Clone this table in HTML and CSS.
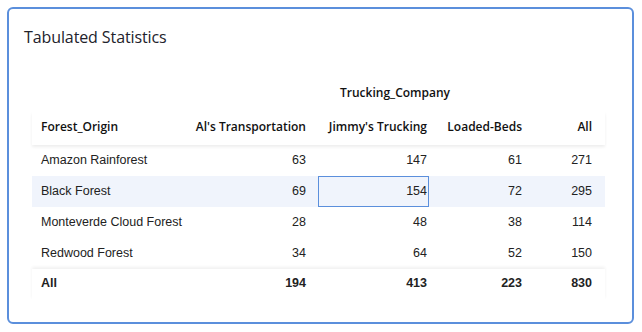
FILE: index.html
```html
<!DOCTYPE html>
<html lang="en">
<head>
    <meta charset="UTF-8">
    <meta name="viewport" content="width=device-width, initial-scale=1.0">
    <title>Tabulated Statistics</title>
    <link rel="stylesheet" href="styles.css">
</head>
<body>

<div class="stats-card">
    <h2 class="card-title">Tabulated Statistics</h2>
    <table class="pivot">
        <colgroup>
            <col class="c1"><col class="c2"><col class="c3"><col class="c4"><col class="c5">
        </colgroup>
        <thead>
            <tr class="group-row">
                <th></th>
                <th></th>
                <th colspan="3" class="group-label">Trucking_Company</th>
            </tr>
            <tr class="head-row">
                <th class="row-label">Forest_Origin</th>
                <th class="num p2">Al's Transportation</th>
                <th class="num p3">Jimmy's Trucking</th>
                <th class="num p4">Loaded-Beds</th>
                <th class="num p5">All</th>
            </tr>
        </thead>
        <tbody>
            <tr>
                <td class="row-label">Amazon Rainforest</td>
                <td class="num p2">63</td><td class="num p3">147</td><td class="num p4">61</td><td class="num p5">271</td>
            </tr>
            <tr class="hover">
                <td class="row-label">Black Forest</td>
                <td class="num p2">69</td><td class="num p3 selected">154</td><td class="num p4">72</td><td class="num p5">295</td>
            </tr>
            <tr>
                <td class="row-label">Monteverde Cloud Forest</td>
                <td class="num p2">28</td><td class="num p3">48</td><td class="num p4">38</td><td class="num p5">114</td>
            </tr>
            <tr>
                <td class="row-label">Redwood Forest</td>
                <td class="num p2">34</td><td class="num p3">64</td><td class="num p4">52</td><td class="num p5">150</td>
            </tr>
        </tbody>
        <tfoot>
            <tr>
                <td class="row-label">All</td>
                <td class="num p2">194</td><td class="num p3">413</td><td class="num p4">223</td><td class="num p5">830</td>
            </tr>
        </tfoot>
    </table>
</div>

</body>
</html>
```

FILE: styles.css
```css
/* card with pivot table */
body {
    margin: 0;
    padding: 7px 8px 8px 7px;
    font-family: "Liberation Sans", Arial, sans-serif;
    color: #222;
    background: #fff;
}
.stats-card {
    height: 317px;
    border: 2px solid #5b8fdc;
    border-radius: 6px;
    padding: 0 15px;
    box-sizing: border-box;
}
.card-title {
    margin: 0;
    padding-top: 17px;
    height: 48px;
    box-sizing: border-box;
    font-family: "Open Sans", "Noto Sans", sans-serif;
    font-size: 16px;
    line-height: 22px;
    letter-spacing: -0.1px;
    font-weight: 500;
    color: #22222b;
}
.pivot {
    margin-left: 8px;
    border-collapse: collapse;
    table-layout: fixed;
    width: 573px;
    font-size: 12.5px;
    line-height: 15px;
}
.c1 { width: 152px; }
.c2 { width: 134px; }
.c3 { width: 111px; }
.c4 { width: 103px; }
.c5 { width: 73px; }
.pivot th,
.pivot td {
    box-sizing: border-box;
    padding-top: 0;
    padding-bottom: 0;
}
.pivot th {
    font-family: "Open Sans", "Noto Sans", sans-serif;
    font-weight: 600;
    font-size: 12px;
    color: #111;
}
.group-row th {
    height: 55px;
    vertical-align: bottom;
    padding-bottom: 12px;
}
.group-label {
    text-align: left;
    padding-left: 22px;
}
.head-row th {
    height: 33px;
    padding-bottom: 4px;
}
.head-row {
    box-shadow: 0 2px 3px rgba(0, 0, 0, 0.07);
}
.pivot td {
    height: 31px;
    padding-bottom: 1px;
}
.row-label {
    text-align: left;
    padding-left: 9px;
}
.num { text-align: right; }
.p2 { padding-right: 12px; }
.p3 { padding-right: 2px; }
.p4 { padding-right: 10px; }
.p5 { padding-right: 13px; }
tr.hover td {
    background: #f0f4fc;
}
td.selected {
    outline: 1px solid #5b8fdc;
    outline-offset: -1px;
}
tfoot tr {
    box-shadow: 0 -2px 3px rgba(0, 0, 0, 0.06);
}
tfoot td {
    font-weight: bold;
}
.pivot tfoot td {
    padding-bottom: 3px;
}
```
